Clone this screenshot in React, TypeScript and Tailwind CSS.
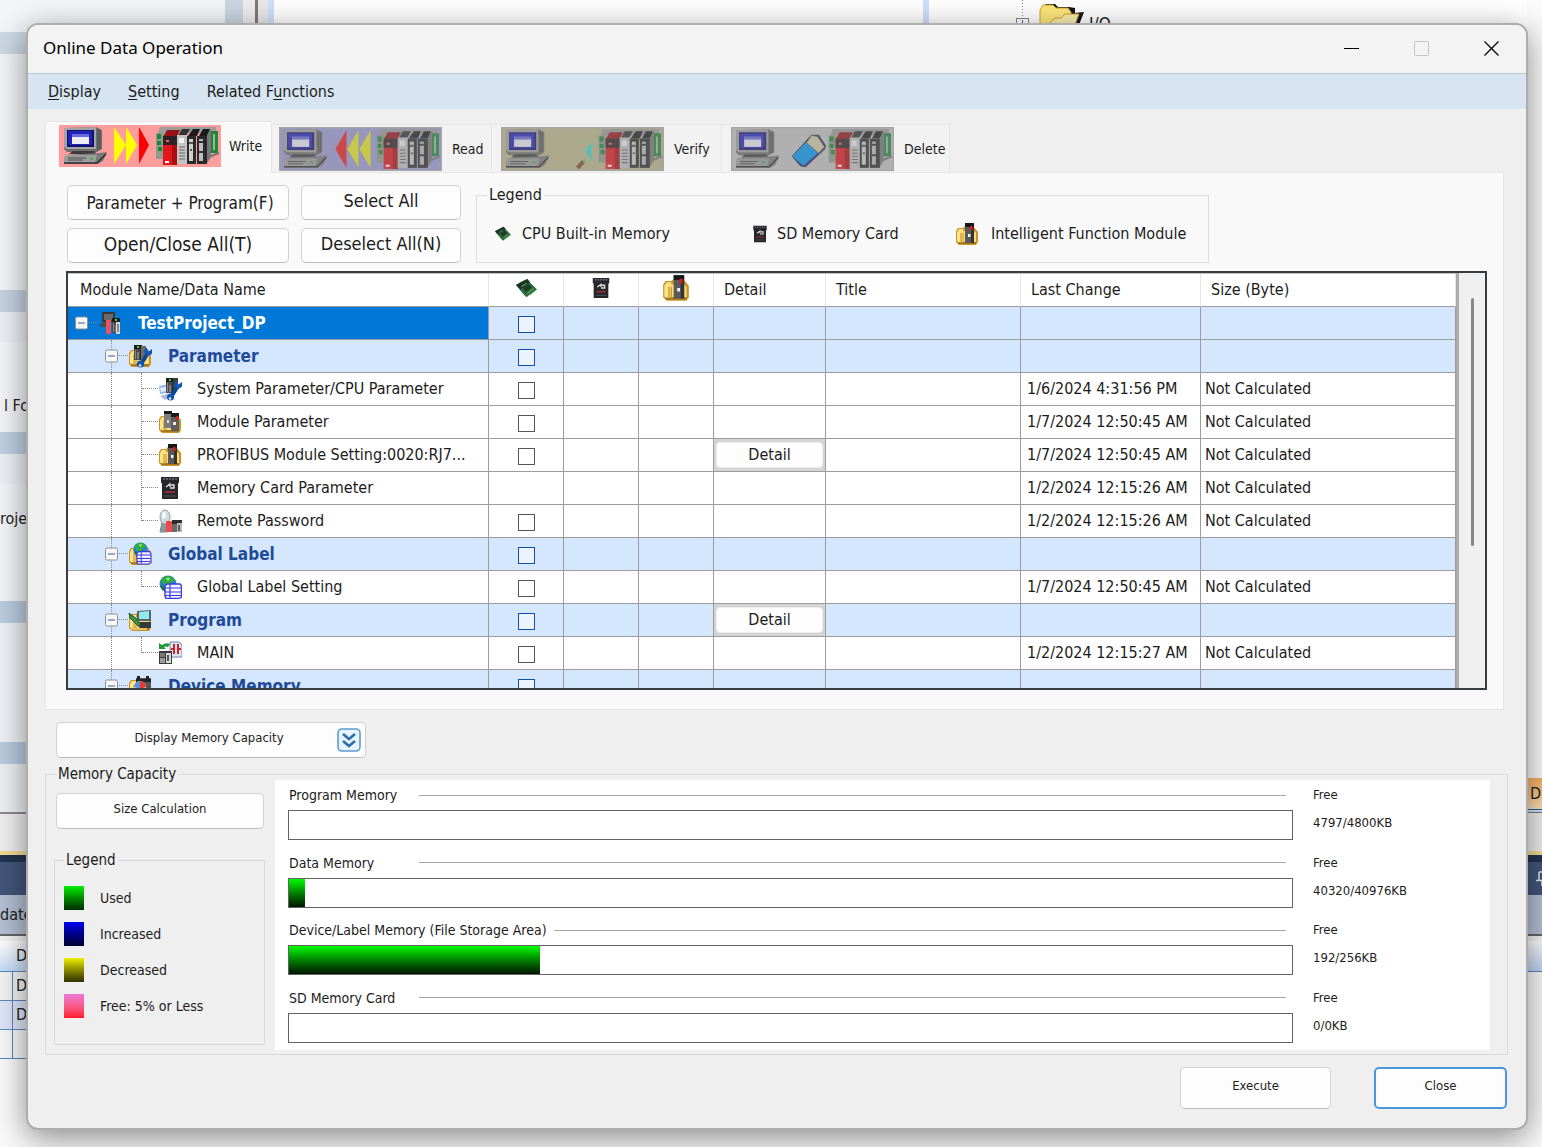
import type { ReactNode } from 'react';

/* ---------- shared drawing parts ---------- */

const Folder = () => (
  <g>
    <path d="M1 9 L3 6 H8 L10 4 H18 L23 10 V20 L21 23 H4 L1 20 Z" fill="#c9932a" />
    <path d="M2 10 L4 7 H8 V21 H4 L2 19 Z" fill="#ffe58a" />
    <path d="M5 9 H19 L21 11 V20 H5 Z" fill="#fbdc78" />
    <path d="M6 11 V20 M8 11 V20" stroke="#c9932a" strokeWidth="1" />
    <path d="M3 21 H21" stroke="#9a6b18" strokeWidth="1.5" />
  </g>
);

const Wrench = () => (
  <g>
    <path d="M13 20 L20 9" stroke="#0b4596" strokeWidth="4" />
    <path d="M24 5 L20.5 7.500 L18.500 3.500 A4.500 4.500 0 0 0 17 10 A4.500 4.500 0 0 0 24 9.500 Z" fill="#1455b0" />
    <circle cx="12.5" cy="20" r="3.600" fill="#1455b0" />
    <circle cx="12" cy="21.5" r="1.300" fill="#dfe9f8" />
  </g>
);

const DarkModule = ({ x, y, light }: { x: number; y: number; light: string }) => (
  <g transform={`translate(${x} ${y})`}>
    <rect width="8" height="15" fill="#4a4a4a" />
    <rect width="8" height="4" fill="#1b1b1b" />
    <rect x="6" y="3" width="2" height="12" fill="#2c2c2c" />
    <rect x="1" y="5" width="1" height="9" fill="#8a8a8a" />
    <rect x="3" y="1" width="2" height="2" fill={light} />
    <rect x="3" y="7" width="2" height="7" fill="#7d7d7d" />
  </g>
);

const Globe = () => (
  <g>
    <circle cx="10" cy="9" r="8.5" fill="#2b7fd0" />
    <path d="M3 4 Q8 -1 14 2 L17 6 L12 8 L10 12 L5 9 Z" fill="#2fae3a" />
    <path d="M4 11 L8 13 L7 17 Q3 14 2 10 Z" fill="#1c7a2e" />
    <path d="M8 3 L12 3 L10 6 Z" fill="#b6f0a8" />
  </g>
);

const Sheet = () => (
  <g>
    <path d="M9 9 H22 L23.5 11 V22 L21 23.5 H8 L7 21 V11 Z" fill="#f2f3ff" stroke="#3b3be0" strokeWidth="1.4" />
    <path d="M7 13 H23 M7 17 H23 M7 20.5 H23 M12 9 V23" stroke="#3b3be0" strokeWidth="1.2" />
  </g>
);

const Icon = ({ children, className = 'size-6' }: { children: ReactNode; className?: string }) => (
  <svg viewBox="0 0 24 24" className={`${className} shrink-0`} aria-hidden="true">
    {children}
  </svg>
);

const FunctionModuleIcon = ({ className }: { className?: string }) => (
  <Icon className={className}>
    <Folder />
    <rect x="10" y="1" width="9" height="20" fill="#5a5a5a" />
    <rect x="10" y="1" width="9" height="4" fill="#161616" />
    <rect x="16" y="5" width="3" height="16" fill="#333" />
    <rect x="15" y="4" width="2.500" height="4" fill="#e01818" />
    <rect x="13" y="12" width="2.500" height="3" fill="#f0f0f0" />
  </Icon>
);

const CardIcon = ({ className }: { className?: string }) => (
  <Icon className={className}>
    <path d="M3 1 H21 V6 L20 8 V23 H4 V8 L3 6 Z" fill="#26262c" />
    <path d="M5 3 H19" stroke="#6e6e78" strokeWidth="1.5" strokeDasharray="2 1" />
    <path d="M8 11 L12 8 V11 M13 9 H16 V12 H12" stroke="#e2e2e2" strokeWidth="1.4" fill="none" />
    <path d="M7 16 H17" stroke="#a33030" strokeWidth="1.6" />
    <path d="M6 20 H18" stroke="#4c4c55" strokeWidth="1.2" />
  </Icon>
);

const ChipIcon = ({ className }: { className?: string }) => (
  <Icon className={className}>
    <path d="M0 8 L7 4 L13 1 L16 5 L24 13 L18 17 L12 22 L8 18 Z" fill="#2f6a3a" />
    <path d="M0 8 L7 4 L13 1 L16 5 L5 13 Z" fill="#1c3324" />
    <path d="M8 11 L15 7 L18 11 L11 16 Z" fill="#213a28" />
    <path d="M13 18 L20 12 M16 19 L22 14 M6 10 L12 6" stroke="#4f9a5a" strokeWidth="1.4" />
  </Icon>
);

const treeIcons: Record<string, ReactNode> = {
  project: (
    <Icon>
      <path d="M4 1 H17 V11 H4 Z" fill="#3a3a3a" />
      <rect x="6" y="3" width="9" height="6" fill="#6a6a6a" />
      <path d="M1 14 L6 11 H12 V16 H3 Z" fill="#4b4b4b" />
      <rect x="8" y="9" width="5" height="14" fill="#e8555a" />
      <DarkModule x={14} y={7} light="#3fd24b" />
      <rect x="18" y="11" width="4" height="12" fill="#d5d5d5" />
      <rect x="19" y="13" width="2" height="8" fill="#8b8b8b" />
    </Icon>
  ),
  parameter: (
    <Icon>
      <Folder />
      <DarkModule x={6} y={1} light="#3fd24b" />
      <rect x="13" y="2" width="5" height="14" fill="#6b6b6b" />
      <Wrench />
    </Icon>
  ),
  system: (
    <Icon>
      <path d="M1 9 L10 7 V16 L2 17 Z" fill="#9db9e6" />
      <path d="M2 11 L8 10 V14 L3 15 Z" fill="#e2edff" />
      <path d="M2 19 L9 17 L13 20 L7 23 Z" fill="#b4bbd8" />
      <DarkModule x={8} y={1} light="#3fd24b" />
      <rect x="15" y="1" width="5" height="12" fill="#3a3a3a" />
      <Wrench />
    </Icon>
  ),
  module: (
    <Icon>
      <Folder />
      <rect x="6" y="1" width="8" height="17" fill="#7d7d7d" />
      <rect x="6" y="1" width="8" height="3" fill="#1a1a1a" />
      <rect x="13" y="3" width="8" height="18" fill="#5e5e5e" />
      <rect x="13" y="3" width="8" height="4" fill="#1a1a1a" />
      <rect x="18" y="6" width="2" height="4" fill="#e01818" />
      <rect x="9" y="10" width="2" height="3" fill="#dcdcdc" />
      <rect x="15" y="12" width="3" height="3" fill="#ececec" />
    </Icon>
  ),
  profibus: <FunctionModuleIcon />,
  card: <CardIcon />,
  password: (
    <Icon>
      <path d="M3 21 H9 M4 13 H8 L9 23 H2 Z" fill="#8f9c9c" stroke="#7e8a8a" />
      <ellipse cx="7" cy="8" rx="5" ry="7" fill="#cfdada" stroke="#93a1a1" />
      <ellipse cx="6" cy="6" rx="2" ry="3.5" fill="#f3f8f8" />
      <rect x="8" y="12" width="6" height="11" fill="#ee4a50" />
      <rect x="14" y="11" width="5" height="12" fill="#6b6b6b" />
      <rect x="14" y="11" width="10" height="4" fill="#2d2d2d" />
      <rect x="19" y="14" width="5" height="9" fill="#b8b8b8" />
      <rect x="20" y="16" width="2" height="6" fill="#5d5d5d" />
    </Icon>
  ),
  label: (
    <Icon>
      <Folder />
      <g transform="translate(4 0) scale(.85)"><Globe /></g>
      <g transform="translate(3 2) scale(.85)"><Sheet /></g>
    </Icon>
  ),
  labelSetting: (
    <Icon>
      <Globe />
      <Sheet />
    </Icon>
  ),
  program: (
    <Icon>
      <Folder />
      <path d="M9 3 L23 2 V13 H9 Z" fill="#5d6464" />
      <path d="M11 4 L21 3 V11 H11 Z" fill="#8fe9ee" />
      <path d="M7 14 H23 V20 H12 Z" fill="#35393b" />
      <path d="M1 5 L9 11 L13 17 L10 18 L2 10 Z" fill="#3e8f46" stroke="#1f5a28" />
      <path d="M3 21 H19" stroke="#f4d77a" strokeWidth="1.5" />
    </Icon>
  ),
  main: (
    <Icon>
      <path d="M12 1 H21 L24 4 V16 H12 Z" fill="#d9e4f4" stroke="#6f87ad" />
      <path d="M13 8 H16 M16 3 V13 M20 3 V13 M20 8 H23" stroke="#d81e1e" strokeWidth="2" fill="none" />
      <path d="M1 8 V2 L4 4 Q8 1 12 3 L10 6 Q7 5 6 6 L8 8 Z" fill="#1f9a35" />
      <rect x="1" y="10" width="13" height="13" fill="#3a3a3a" />
      <rect x="2" y="12" width="5" height="4" fill="#7b7b7b" />
      <rect x="2" y="17" width="5" height="5" fill="#9d9d9d" />
      <rect x="8" y="12" width="5" height="10" fill="#d9d9d9" />
      <rect x="9" y="14" width="2" height="6" fill="#565656" />
    </Icon>
  ),
  device: (
    <Icon>
      <Folder />
      <path d="M8 4 H23 V21 H8 Z" fill="#555" />
      <path d="M9 2 H12 V5 H9 Z M18 2 H21 V5 H18 Z M8 5 H23 V8 H8 Z" fill="#222" />
      <circle cx="12" cy="13" r="6" fill="#d6dfee" />
      <path d="M12 7 A6 6 0 0 1 18 13 L12 15 Z" fill="#e23a2c" />
      <path d="M6 13 A6 6 0 0 1 12 7 V15 Z" fill="#5b8fe0" />
    </Icon>
  ),
};

/* ---------- tab banners ---------- */

const Computer = () => (
  <g>
    <path d="M5 3 L37 2 L43 5 V24 L38 27 H8 L5 24 Z" fill="#6f6f6f" />
    <path d="M5 3 L37 2 V24 H8 L5 22 Z" fill="#a3a3a3" />
    <path d="M39 4 V25 M41 5 V24" stroke="#4a4a4a" />
    <rect x="8" y="5" width="27" height="17" fill="#10106e" />
    <rect x="9" y="6" width="24" height="14" fill="#2222b4" />
    <rect x="13" y="11" width="17" height="8" fill="#ececf6" />
    <rect x="13" y="9" width="17" height="3" fill="#6a6ae0" />
    <path d="M14 26 H35 L38 29 H10 Z" fill="#3c3c3c" />
    <path d="M6 30 L40 28 L48 27 L44 36 L39 39 H5 Z" fill="#7a7a7a" />
    <path d="M6 30 H38 L36 38 H5 Z" fill="#9c9c9c" />
    <path d="M5 38 H38 L47 29" stroke="#2e2e2e" strokeWidth="1.5" fill="none" />
    <path d="M9 33 H27 M9 35 H24" stroke="#4e4e4e" />
    <rect x="31" y="33" width="3" height="1.5" fill="#24b324" />
  </g>
);

const Rack = () => (
  <g>
    <path d="M101 2 H157 V8 H99 Z" fill="#9c9c9c" />
    <rect x="97" y="8" width="8" height="26" fill="#8f9a8f" />
    <path d="M98 9 H102 V14 H98 Z M98 16 H102 V20 H98 Z M99 22 H103 V26 H99 Z" fill="#158a2e" />
    <path d="M108 5 H121 L118 12 H104 Z" fill="#96131a" />
    <rect x="104" y="11" width="14" height="29" fill="#e3161c" />
    <rect x="104" y="11" width="14" height="9" fill="#2e2226" />
    <rect x="113" y="20" width="5" height="20" fill="#a80d12" />
    <rect x="107" y="15" width="3" height="2" fill="#ff5a5a" />
    <rect x="106" y="36" width="4" height="2" fill="#fff" />
    <path d="M123 4 H131 L127 11 H119 Z" fill="#333" />
    <rect x="118" y="10" width="10" height="29" fill="#c4c4c4" />
    <rect x="120" y="13" width="5" height="5" fill="#f1f1f1" />
    <path d="M120 22 H126 M120 25 H126 M120 28 H126 M120 31 H126 M120 34 H126" stroke="#666" />
    <path d="M134 4 H141 L138 11 H129 Z" fill="#1c1c1c" />
    <rect x="128" y="11" width="9" height="28" fill="#2a2a2a" />
    <rect x="130" y="14" width="4" height="22" fill="#d0d0d0" />
    <path d="M130 18 H134 M131 25 H133" stroke="#555" strokeWidth="2" />
    <path d="M144 4 H151 L148 11 H140 Z" fill="#1c1c1c" />
    <rect x="138" y="11" width="10" height="28" fill="#2a2a2a" />
    <rect x="140" y="14" width="4" height="22" fill="#bdbdbd" />
    <path d="M140 17 H144 M140 27 H144" stroke="#333" strokeWidth="2" />
    <path d="M148 10 L152 4 V32 L148 38 Z" fill="#777" />
    <rect x="152" y="6" width="7" height="22" fill="#23833a" />
    <path d="M155 9 V25" stroke="#b8d8bd" strokeWidth="1.4" />
    <path d="M150 32 L160 28" stroke="#777" strokeWidth="2" />
  </g>
);

const Banner = ({ fill, muted, children }: { fill: string; muted?: boolean; children: ReactNode }) => (
  <svg viewBox="0 0 162 42" className={muted ? 'h-11 w-[163px] shrink-0' : 'h-[42px] w-[162px] shrink-0'} preserveAspectRatio="none" aria-hidden="true">
    <rect width="162" height="42" fill={fill} />
    <Computer />
    {children}
    <Rack />
    {muted && <rect width="162" height="42" fill="#909090" opacity=".38" />}
    {muted && <rect x=".5" y=".5" width="161" height="41" fill="none" stroke="#a4a4a4" strokeWidth="1.5" />}
  </svg>
);

const tabs = [
  {
    name: 'Write', active: true, box: 'w-[227px] pl-[13px]',
    art: (
      <Banner fill="#ff9c9c">
        <path d="M55 2 L67 20 L55 39 Z M67 2 L78 20 L67 39 Z" fill="#ffff00" />
        <path d="M80 2 L90 20 L80 39 Z" fill="#ff0000" />
      </Banner>
    ),
  },
  {
    name: 'Read', box: 'w-[220px] pl-[7px]',
    art: (
      <Banner fill="#9c9cd8" muted>
        <path d="M67 3 L56 21 L67 39 Z" fill="#ee1c1c" />
        <path d="M79 3 L68 21 L79 39 Z M91 3 L80 21 L91 39 Z" fill="#e8e820" />
      </Banner>
    ),
  },
  {
    name: 'Verify', box: 'w-[230px] pl-[9px]',
    art: (
      <Banner fill="#bdb68a" muted>
        <circle cx="90" cy="23" r="10" fill="none" stroke="#7fe0a8" strokeWidth="1.2" strokeDasharray="2 3" />
        <path d="M91 17 Q83 20 86 25 Q87 28 91 31 Q86 24 91 17 Z" fill="#22e0e0" stroke="#22e0e0" />
        <path d="M76 39 L82 33" stroke="#7a4a28" strokeWidth="4" />
        <path d="M82 34 L84 31" stroke="#6fbf5a" strokeWidth="2" />
      </Banner>
    ),
  },
  {
    name: 'Delete', box: 'w-[228px] pl-[9px]',
    art: (
      <Banner fill="#c4c4c4" muted>
        <path d="M80 8 L87 8 L94 18 L93 21 L74 38 L69 37 L61 28 Z" fill="#20209a" stroke="#333" />
        <path d="M75 14 L87 24 L72 37 L61 28 Z" fill="#0098f4" />
        <path d="M80 8 L86 9 L93 19 L87 25 L75 15 Z" fill="#cfcba8" stroke="#555" strokeWidth=".8" />
      </Banner>
    ),
  },
];

/* ---------- module tree ---------- */

type Row = {
  name: string;
  icon: string;
  level: 0 | 1 | 2;
  last?: boolean;
  check?: boolean;
  detail?: boolean;
  date?: string;
};

const rows: Row[] = [
  { name: 'TestProject_DP', icon: 'project', level: 0, check: true },
  { name: 'Parameter', icon: 'parameter', level: 1, check: true },
  { name: 'System Parameter/CPU Parameter', icon: 'system', level: 2, check: true, date: '1/6/2024 4:31:56 PM' },
  { name: 'Module Parameter', icon: 'module', level: 2, check: true, date: '1/7/2024 12:50:45 AM' },
  { name: 'PROFIBUS Module Setting:0020:RJ7...', icon: 'profibus', level: 2, check: true, detail: true, date: '1/7/2024 12:50:45 AM' },
  { name: 'Memory Card Parameter', icon: 'card', level: 2, date: '1/2/2024 12:15:26 AM' },
  { name: 'Remote Password', icon: 'password', level: 2, last: true, check: true, date: '1/2/2024 12:15:26 AM' },
  { name: 'Global Label', icon: 'label', level: 1, check: true },
  { name: 'Global Label Setting', icon: 'labelSetting', level: 2, last: true, check: true, date: '1/7/2024 12:50:45 AM' },
  { name: 'Program', icon: 'program', level: 1, check: true, detail: true },
  { name: 'MAIN', icon: 'main', level: 2, last: true, check: true, date: '1/2/2024 12:15:27 AM' },
  { name: 'Device Memory', icon: 'device', level: 1, check: true },
];

const Slot = ({ stem, branch, toggle }: { stem: 'none' | 'full' | 'half'; branch?: boolean; toggle?: string }) => (
  <span className="relative flex h-full w-[30px] shrink-0">
    <span
      className={
        stem === 'none' ? 'w-[14px]' : stem === 'full' ? 'h-full w-[14px] border-r border-dotted border-[#8a8a8a]' : 'h-1/2 w-[14px] border-r border-dotted border-[#8a8a8a]'
      }
    />
    {branch && <span className="h-1/2 flex-1 border-b border-dotted border-[#8a8a8a]" />}
    {toggle && (
      <button
        type="button"
        aria-label={`Collapse ${toggle}`}
        className="absolute top-1/2 left-[7px] flex size-[13px] -translate-y-1/2 items-center justify-center rounded-xs border border-[#909090] bg-[#f7f7f7]"
      >
        <span className="h-px w-[7px] bg-[#3b5fa8]" />
      </button>
    )}
  </span>
);

const cell = 'h-[33px] border-r border-b border-[#9c9c9c] p-0';
const head = 'h-[33px] border-r border-b border-r-[#e6e6e6] border-b-[#9c9c9c] bg-white p-0 text-left font-normal';

const ModuleRow = ({ row }: { row: Row }) => {
  const group = row.level < 2;
  return (
    <tr className={group ? 'bg-[#d5e7ff]' : 'bg-white'}>
      <td className={row.level === 0 ? `${cell} bg-[#0078d7]` : cell}>
        <div className="flex h-8 items-center">
          {row.level === 0 && <Slot stem="none" branch toggle={row.name} />}
          {row.level === 1 && (
            <>
              <Slot stem="none" />
              <Slot stem="full" branch toggle={row.name} />
            </>
          )}
          {row.level === 2 && (
            <>
              <Slot stem="none" />
              <Slot stem="full" />
              <Slot stem={row.last ? 'half' : 'full'} branch />
            </>
          )}
          {treeIcons[row.icon]}
          <span
            className={
              row.level === 0
                ? 'ml-4 text-[17px] font-bold whitespace-nowrap text-white'
                : group
                  ? 'ml-4 text-[17px] font-bold whitespace-nowrap text-[#1f4a98]'
                  : 'ml-[15px] whitespace-nowrap'
            }
          >
            {row.name}
          </span>
        </div>
      </td>
      <td className={cell}>
        {row.check && (
          <input
            type="checkbox"
            aria-label={`Select ${row.name}`}
            className={
              group
                ? 'mx-auto mt-0.5 block size-[17px] appearance-none border border-[#0f4fa8] bg-[#eaf3ff]'
                : 'mx-auto mt-0.5 block size-[17px] appearance-none border border-[#555] bg-white'
            }
          />
        )}
      </td>
      <td className={cell} />
      <td className={cell} />
      <td className={cell}>
        {row.detail && (
          <div className="h-8 bg-[#d4d4d4] px-0.5 py-[3px]">
            <button type="button" className="h-full w-full rounded-sm border border-[#ececec] bg-[#fdfdfd] leading-none">
              Detail
            </button>
          </div>
        )}
      </td>
      <td className={cell} />
      <td className={`${cell} pl-1.5 whitespace-nowrap`}>{row.date}</td>
      <td className={`${cell} pl-1 whitespace-nowrap`}>{row.date && 'Not Calculated'}</td>
    </tr>
  );
};

/* ---------- memory capacity ---------- */

const memories = [
  { name: 'Program Memory', free: 4797, total: 4800 },
  { name: 'Data Memory', free: 40320, total: 40976 },
  { name: 'Device/Label Memory (File Storage Area)', free: 192, total: 256 },
  { name: 'SD Memory Card', free: 0, total: 0 },
];

const swatches = [
  { name: 'Used', tone: 'bg-linear-to-b from-[#00f000] to-[#003000]' },
  { name: 'Increased', tone: 'bg-linear-to-b from-[#0000f0] to-[#000030]' },
  { name: 'Decreased', tone: 'bg-linear-to-b from-[#f0f000] to-[#303000]' },
  { name: 'Free: 5% or Less', tone: 'bg-linear-to-b from-[#ee78d8] to-[#ff1020]' },
];

const usedPercent = (free: number, total: number) => (total ? Math.floor((1 - free / total) * 1000) / 10 : 0);

const button = 'rounded-[5px] border border-[#d2d2d2] border-b-[#bdbdbd] bg-[#fdfdfd]';

/* ---------- application window behind the dialog ---------- */

const Backdrop = () => (
  <div className="absolute inset-0 flex overflow-hidden bg-[#fafafa]" aria-hidden="true">
    <div className="flex w-[225px] flex-col bg-[#f3f5f9] text-[#222]">
      <div className="h-8" />
      <div className="h-[22px] bg-[#cdd9e5]" />
      <div className="h-[236px]" />
      <div className="h-[22px] bg-[#c6d4e3]" />
      <div className="h-[30px] bg-[#edf1f5]" />
      <div className="flex h-[90px] items-center pt-[37px] pl-1">l Fo</div>
      <div className="h-[22px] bg-[#c0d0e3]" />
      <div className="h-[30px] bg-[#edf1f5]" />
      <div className="flex h-[117px] items-start pt-[25px]">roje</div>
      <div className="h-[22px] bg-[#bccde2]" />
      <div className="h-[119px] bg-[#eef1f5]" />
      <div className="h-[22px] bg-[#b9cbe0]" />
      <div className="h-[48px] bg-[#edf0f3]" />
      <div className="h-[39px] border-t-2 border-[#8a8a8a] bg-[#efefef]" />
      <div className="h-1 bg-[#f3dc94]" />
      <div className="h-[7px] bg-[#24344f]" />
      <div className="h-[33px] bg-[#43557b]" />
      <div className="flex h-[39px] items-center bg-[#b3bfd3]">date</div>
      <div className="h-[7px] border-t-2 border-[#666] bg-[#f4f4f4]" />
      <div className="flex h-[31px] items-center border-b border-[#5a86c0] bg-linear-to-b from-white to-[#c6dcf8] pl-4">D</div>
      <div className="flex h-[29px] items-center border-b border-[#5a86c0] bg-[#f4f4f4] pl-3">
        <span className="border-l border-[#5a86c0] pl-[3px] leading-[28px]">D</span>
      </div>
      <div className="flex h-[29px] items-center border-b border-[#5a86c0] bg-[#dfe6f8] pl-3">
        <span className="border-l border-[#5a86c0] pl-[3px] leading-[28px]">D</span>
      </div>
      <div className="flex h-[29px] border-b border-[#5a86c0] bg-[#f8f8f8] pl-3">
        <span className="border-l border-[#5a86c0]" />
      </div>
      <div className="flex-1 bg-[#fafafa]" />
    </div>
    <div className="h-8 w-[18px] bg-[#cad6e1]" />
    <div className="h-8 w-3 bg-[#ededed]" />
    <div className="h-8 w-[3px] bg-[#7a7a7a]" />
    <div className="h-8 w-2.5 bg-[#e9e9e9]" />
    <div className="h-8 w-1.5 bg-[#d0e0fa]" />
    <div className="h-8 flex-1 bg-white" />
    <div className="h-8 w-1.5 bg-[#d0e0fa]" />
    <div className="flex h-8 w-[598px] overflow-hidden bg-white pl-[86px]">
      <svg viewBox="0 0 70 32" className="h-8 w-[70px] shrink-0">
        <path d="M7.500 0 V18 M14 24.500 H24" stroke="#888" strokeDasharray="1 2" />
        <rect x="1.500" y="18.500" width="12" height="12" fill="#fff" stroke="#888" />
        <path d="M7.500 20 V29 M3 24.500 H12" stroke="#2f5fb0" />
        <path d="M27 8 L31 4 H40 L43 7 H54 L60 8 V13 L69 12 L62 30 H27 Z" fill="#111" />
        <path d="M25 10 L28 5 H38 L41 8 H53 L56 12 V28 H25 Z" fill="#fbe77c" stroke="#d39a2b" />
        <path d="M29 28 L40 18 H46 L50 14 H64 L58 30 H28 Z" fill="#f8edab" stroke="#d39a2b" />
      </svg>
      <span className="pt-3 pl-1 text-[17px] leading-6">I/O</span>
    </div>
    <div className="flex w-[15px] flex-col">
      <div className="h-[778px] bg-[#fbfbfb]" />
      <div className="flex h-[31px] items-center bg-linear-to-b from-[#f5b060] to-[#fbe0b8] pl-[3px]">D</div>
      <div className="h-1 border-y border-t-[#2f5fb0] border-b-[#7a7a7a] bg-[#cfe0f5]" />
      <div className="h-[38px] bg-[#efefef]" />
      <div className="h-1 bg-[#f3dc94]" />
      <div className="h-[7px] bg-[#24344f]" />
      <div className="flex h-[33px] items-center bg-[#43557b] pl-2">
        <svg viewBox="0 0 14 16" className="h-4 w-3.5 shrink-0">
          <path d="M4 1 H11 V9 M4 1 V9 M1 9.500 H13 M7 10 V15" stroke="#dfe5ef" strokeWidth="1.500" fill="none" />
        </svg>
      </div>
      <div className="h-[39px] bg-[#b3bfd3]" />
      <div className="h-[7px] border-t-2 border-[#666] bg-[#f4f4f4]" />
      <div className="h-[31px] border-b border-[#5a86c0] bg-linear-to-b from-white to-[#bcd2f0]" />
    </div>
  </div>
);

export default function App() {
  return (
    <div className="relative flex min-h-screen flex-col pt-[23px] pr-3.5 pb-[18px] pl-[26px] font-['DejaVu_Sans_Condensed','Noto_Sans',sans-serif] text-[16px] leading-5 text-[#1c1c1c]">
      <Backdrop />
      <main className="relative flex flex-1 flex-col overflow-clip rounded-xl border-2 border-[#adadad] bg-[#efefef] shadow-[0_8px_32px_rgba(0,0,0,0.45)]">
        <header className="flex h-12 items-center bg-[#f3f3f3] pr-[27px] pb-0.5 pl-[15px]">
          <h1 className="flex-1 font-['Noto_Sans',sans-serif] text-[17px] leading-6 text-black">Online Data Operation</h1>
          <div className="flex items-center gap-[55px]">
            <button type="button" aria-label="Minimize">
              <svg viewBox="0 0 15 15" className="size-[15px]"><path d="M0 7.500 H15" stroke="#000" /></svg>
            </button>
            <button type="button" aria-label="Maximize" disabled>
              <svg viewBox="0 0 15 15" className="size-[15px]"><rect x=".5" y=".5" width="14" height="14" rx="1" fill="none" stroke="#c3c3c3" /></svg>
            </button>
            <button type="button" aria-label="Close window">
              <svg viewBox="0 0 15 15" className="size-[15px]"><path d="M.5 .5 L14.500 14.500 M14.500 .5 L.5 14.500" stroke="#000" strokeWidth="1.300" /></svg>
            </button>
          </div>
        </header>
        <nav className="flex h-9 items-center gap-[27px] border-t border-[#bccbd8] bg-[#d7e4f1] pl-5">
          <button type="button"><u className="underline-offset-2">D</u>isplay</button>
          <button type="button"><u className="underline-offset-2">S</u>etting</button>
          <button type="button">Related F<u className="underline-offset-2">u</u>nctions</button>
        </nav>

        <div className="flex flex-1 flex-col pt-3 pr-[18px] pb-[19px] pl-[17px]">
          <div role="tablist" className="flex items-end">
            {tabs.map((tab) => (
              <button
                key={tab.name}
                type="button"
                role="tab"
                aria-selected={!!tab.active}
                className={
                  tab.active
                    ? `${tab.box} relative -mb-px flex h-[52px] items-center gap-2 border border-b-0 border-[#e6e6e6] bg-[#f9f9f9] pb-1 text-[14px]`
                    : `${tab.box} flex h-12 items-center gap-2.5 border border-b-0 border-l-0 border-[#e6e6e6] bg-[#f2f2f2] text-[14px]`
                }
              >
                {tab.art}
                <span>{tab.name}</span>
              </button>
            ))}
          </div>

          <section className="mr-1 border border-[#e6e6e6] bg-[#f9f9f9] pt-3 pr-4 pb-[19px] pl-5">
            <div className="flex items-start pl-px">
              <div className="grid grid-cols-[222px_160px] gap-x-3 gap-y-2">
                <button type="button" className={`${button} h-[35px] pl-1 text-[17px]`}>Parameter + Program(F)</button>
                <button type="button" className={`${button} h-[35px] pb-1 text-[18px]`}>Select All</button>
                <button type="button" className={`${button} h-[35px] pb-1 text-[19px]`}>Open/Close All(T)</button>
                <button type="button" className={`${button} h-[35px] pb-1 text-[18px]`}>Deselect All(N)</button>
              </div>
              <fieldset className="ml-[15px] w-[733px] border border-[#dcdcdc] pb-4 pl-[18px]">
                <legend className="-ml-2 px-0.5">Legend</legend>
                <ul className="grid grid-cols-[256px_204px_auto] pt-[17px]">
                  <li className="flex items-center gap-[11px]"><ChipIcon className="size-4" />CPU Built-in Memory</li>
                  <li className="flex items-center gap-2"><CardIcon className="size-[18px]" />SD Memory Card</li>
                  <li className="flex items-center gap-3"><FunctionModuleIcon className="size-6" />Intelligent Function Module</li>
                </ul>
              </fieldset>
            </div>

            <div className="mt-2 flex h-[419px] border-2 border-[#3a3d40] bg-white">
              <div className="min-w-0 flex-1 overflow-y-auto border-t border-[#c4c4c4] [scrollbar-width:none]">
                <table className="w-full table-fixed border-separate border-spacing-0">
                  <colgroup>
                    <col className="w-[421px]" />
                    <col className="w-[75px]" />
                    <col className="w-[75px]" />
                    <col className="w-[75px]" />
                    <col className="w-[112px]" />
                    <col className="w-[195px]" />
                    <col className="w-[180px]" />
                    <col />
                  </colgroup>
                  <thead>
                    <tr>
                      <th className={`${head} pl-3`}>Module Name/Data Name</th>
                      <th className={head} aria-label="CPU Built-in Memory"><ChipIcon className="mx-auto mb-1 size-[21px]" /></th>
                      <th className={head} aria-label="SD Memory Card"><CardIcon className="mx-auto mb-1 size-[22px]" /></th>
                      <th className={head} aria-label="Intelligent Function Module"><FunctionModuleIcon className="mx-auto mb-1 size-7" /></th>
                      <th className={`${head} pl-2.5`}>Detail</th>
                      <th className={`${head} pl-2.5`}>Title</th>
                      <th className={`${head} pl-2.5`}>Last Change</th>
                      <th className={`${head} pl-2.5`}>Size (Byte)</th>
                    </tr>
                  </thead>
                  <tbody>
                    {rows.map((row) => <ModuleRow key={row.name} row={row} />)}
                  </tbody>
                </table>
              </div>
              <div className="w-[3px] bg-[#ababab]" />
              <div className="flex w-[26px] justify-center bg-[#f0f0f0] pt-[25px]">
                <div className="h-[248px] w-[3px] rounded-full bg-[#868686]" />
              </div>
            </div>
          </section>

          <button type="button" className={`${button} relative mt-3 ml-[11px] h-9 w-[310px] shrink-0 pr-1 pb-1 text-[13px]`}>
            Display Memory Capacity
            <svg viewBox="0 0 24 24" className="absolute top-[5px] right-1 size-6" aria-hidden="true">
              <rect x="1" y="1" width="22" height="22" rx="4" fill="#e8f3fc" stroke="#5a9bd3" strokeWidth="1.600" />
              <path d="M6 6 L12 11 L18 6 M6 13 L12 18 L18 13" stroke="#2f6fae" strokeWidth="2.600" fill="none" />
            </svg>
          </button>

          <fieldset className="mt-2.5 border border-[#dadada] pb-1 pl-2">
            <legend className="ml-0.5 px-0.5 text-[15px] leading-3">Memory Capacity</legend>
            <div className="flex">
              <div className="flex w-[211px] shrink-0 flex-col">
                <button type="button" className={`${button} mt-[13px] ml-0.5 h-9 w-[208px] pb-1 text-[13px]`}>Size Calculation</button>
                <fieldset className="mt-[25px] border border-[#dadada] pb-[26px] pl-[9px]">
                  <legend className="px-0.5 text-[15px] leading-3">Legend</legend>
                  <ul className="flex flex-col gap-3 pt-5 text-[14px]">
                    {swatches.map((s) => (
                      <li key={s.name} className="flex h-6 items-center gap-4">
                        <span className={`${s.tone} h-6 w-5`} />
                        {s.name}
                      </li>
                    ))}
                  </ul>
                </fieldset>
              </div>
              <div className="mr-[17px] ml-2.5 grid h-[270px] flex-1 grid-rows-4 bg-white pl-[13px] text-[13px] leading-[18px]">
                {memories.map((m) => (
                  <div key={m.name} className="flex gap-5 pt-1.5">
                    <div className="flex-1">
                      <div className="flex items-center gap-[7px] pr-[7px] pl-px">
                        <span className="min-w-[123px] text-[14px]">{m.name}</span>
                        <span className="h-px flex-1 bg-[#a6a6a6]" />
                      </div>
                      <div role="progressbar" aria-label={m.name} aria-valuenow={usedPercent(m.free, m.total)} className="mt-1.5 h-[30px] border border-[#636363] bg-white">
                        <div className="h-full bg-linear-to-b from-[#00ff00] to-[#001800]" style={{ width: `${usedPercent(m.free, m.total)}%` }} />
                      </div>
                    </div>
                    <div className="flex w-[177px] flex-col gap-2.5">
                      <span>Free</span>
                      <span>{`${m.free}/${m.total}KB`}</span>
                    </div>
                  </div>
                ))}
              </div>
            </div>
          </fieldset>

          <footer className="mt-3 flex justify-end gap-[43px] pr-px text-[13px]">
            <button type="button" className={`${button} h-[42px] w-[151px] pb-1`}>Execute</button>
            <button type="button" className="h-[42px] w-[133px] rounded-[5px] border-2 border-[#4a98d9] bg-[#fdfdfd] pb-1">Close</button>
          </footer>
        </div>
      </main>
    </div>
  );
}
